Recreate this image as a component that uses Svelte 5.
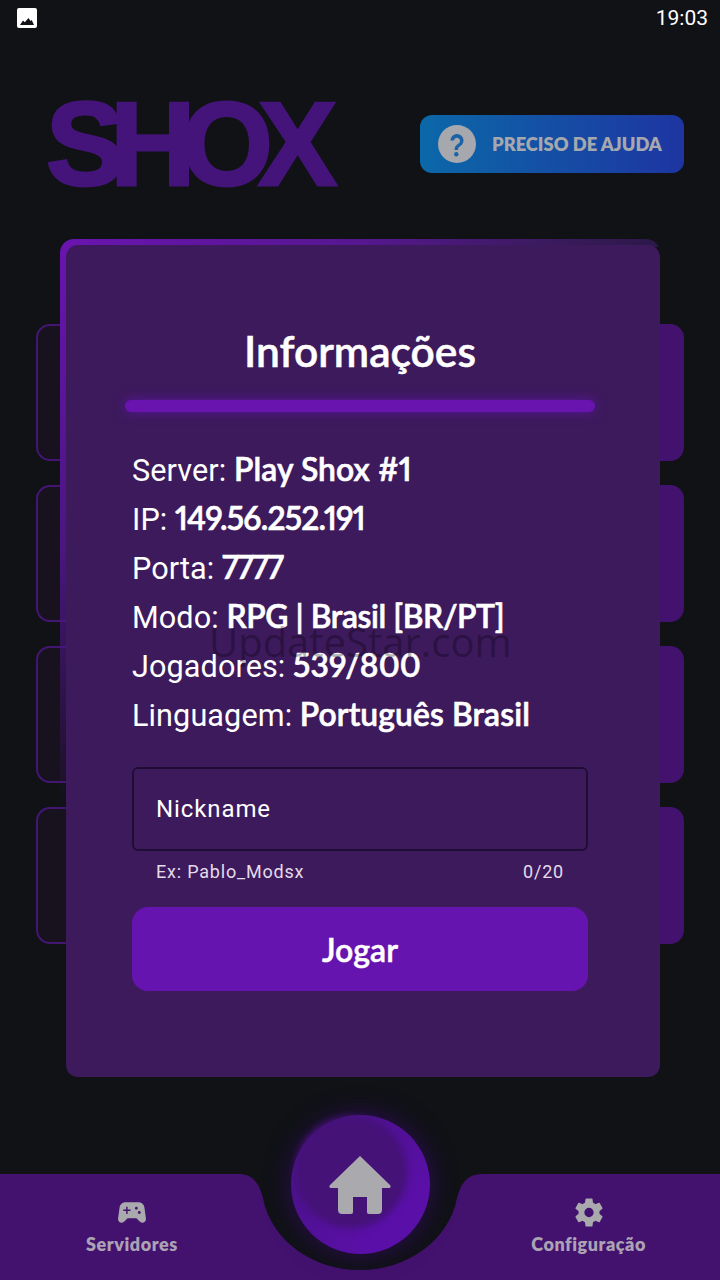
<script>
  const rows = [
    { k: 'Server', v: 'Play Shox #1' },
    { k: 'IP', v: '149.56.252.191', cls: 'tight' },
    { k: 'Porta', v: '7777', cls: 'tighter' },
    { k: 'Modo', v: 'RPG | Brasil [BR/PT]', cls: 'snug' },
    { k: 'Jogadores', v: '539/800' },
    { k: 'Linguagem', v: 'Português Brasil' }
  ];
  const cards = [1, 2, 3, 4];
</script>

<div class="page">
  <div class="statusbar">
    <svg class="status-icon" viewBox="0 0 20 20" width="20" height="20">
      <rect width="20" height="20" rx="2" fill="#fff" />
      <path d="M3 17l3-4.500 1.800 1.800L11.500 10l2 3 1.200-1L17 17z" fill="#101216" />
    </svg>
    <span class="clock">19:03</span>
  </div>

  <header class="header">
    <div class="logo">SHOX</div>
    <div class="help">
      <svg class="help-icon" viewBox="0 0 38 38" width="38" height="38">
        <circle cx="19" cy="19" r="19" fill="#a6a8ae" />
        <path d="M12.500 15.500a6.500 6.500 0 1 1 10.200 5.300c-1.900 1.300-2.700 2.200-2.700 4.200h-3.400c0-3.200 1.200-4.500 3.600-6.200a3.100 3.100 0 1 0-4.300-3.300z" fill="#1b62a6" />
        <circle cx="18.300" cy="29.300" r="2.200" fill="#1b62a6" />
      </svg>
      <span>PRECISO DE AJUDA</span>
    </div>
  </header>

  <div class="cards">
    {#each cards as c}
      <div class="card">
        <div class="card-left"></div>
        <div class="card-right"></div>
      </div>
    {/each}
  </div>

  <nav class="nav">
    <svg class="nav-bg" viewBox="0 0 720 106" width="720" height="106">
      <path d="M0 0H238C252 0 259 8 263 24C271 66 312 96 360 96C408 96 449 66 457 24C461 8 468 0 482 0H720V106H0Z" fill="#43126f" />
    </svg>
    <div class="nav-item">
      <svg viewBox="0 0 24 24" width="36" height="36">
        <path d="M21.580 16.090l-1.090-7.660C20.210 6.460 18.520 5 16.530 5H7.470C5.480 5 3.790 6.460 3.510 8.430l-1.090 7.660C2.200 17.630 3.390 19 4.940 19c.68 0 1.320-.27 1.800-.75L9 16h6l2.250 2.250c.48.48 1.130.75 1.800.75 1.560 0 2.750-1.370 2.530-2.910zM11 11H9v2H8v-2H6v-1h2V8h1v2h2v1zm4-1c-.55 0-1-.45-1-1s.45-1 1-1 1 .45 1 1-.45 1-1 1zm2 3c-.55 0-1-.45-1-1s.45-1 1-1 1 .45 1 1-.45 1-1 1z" fill="#a9a9ae" />
      </svg>
      <span>Servidores</span>
    </div>
    <div class="nav-item">
      <svg viewBox="0 0 24 24" width="36" height="36">
        <path d="M19.140 12.940c.04-.3.060-.61.060-.94s-.02-.64-.07-.94l2.030-1.580a.49.49 0 0 0 .12-.61l-1.920-3.320a.49.49 0 0 0-.59-.22l-2.390.96a7 7 0 0 0-1.620-.94l-.36-2.540a.48.48 0 0 0-.48-.41h-3.840a.48.48 0 0 0-.47.41l-.36 2.540a7.200 7.200 0 0 0-1.620.94l-2.390-.96a.48.48 0 0 0-.59.22L2.740 8.870a.48.48 0 0 0 .12.61l2.030 1.580c-.05.3-.09.63-.09.94s.02.64.07.94l-2.030 1.580a.49.49 0 0 0-.12.61l1.920 3.320c.12.22.37.29.59.22l2.390-.96c.5.38 1.030.7 1.620.94l.36 2.540c.05.24.24.41.48.41h3.840c.24 0 .44-.17.47-.41l.36-2.540a7 7 0 0 0 1.620-.94l2.390.96c.22.08.47 0 .59-.22l1.920-3.320a.48.48 0 0 0-.12-.61zM12 15.200a3.200 3.200 0 1 1 0-6.400 3.200 3.200 0 0 1 0 6.400z" fill="#a9a9ae" />
      </svg>
      <span>Configuração</span>
    </div>
    <div class="home">
      <div class="home-inner"></div>
      <svg class="home-icon" viewBox="0 0 62 58" width="62" height="58">
        <path d="M31 0L61 29c1.200 1.300.5 3-1.200 3H53v22c0 2.400-1.600 4-4 4H40c-1.300 0-2-.7-2-2V41H24v15c0 1.300-.7 2-2 2H13c-2.400 0-4-1.600-4-4V32H2.200C.5 32-.2 30.300 1 29z" fill="#a9a9ae" />
      </svg>
    </div>
  </nav>

  <div class="modal">
    <div class="modal-inner">
      <h2>Informações</h2>
      <div class="bar"></div>
      <div class="info">
        {#each rows as row}
          <p>{row.k}: <b class={row.cls}>{row.v}</b></p>
        {/each}
      </div>
      <div class="field">Nickname</div>
      <div class="helper"><span>Ex: Pablo_Modsx</span><span>0/20</span></div>
      <div class="play">Jogar</div>
    </div>
  </div>

  <div class="watermark">UpdateStar.com</div>
</div>

<style>
  :global(body) {
    margin: 0;
    background: #101216;
  }

  .page {
    position: relative;
    width: 720px;
    height: 1280px;
    overflow: hidden;
    display: flex;
    flex-direction: column;
    background: #101216;
    font-family: Roboto, sans-serif;
  }

  .statusbar {
    height: 36px;
    padding: 0 12px 0 17px;
    display: flex;
    align-items: center;
    justify-content: space-between;
  }
  .clock {
    color: #fff;
    font-size: 21px;
    font-weight: 400;
  }

  .header {
    height: 288px;
    padding: 0 36px 0 46px;
    display: flex;
    justify-content: space-between;
    box-sizing: border-box;
  }
  .logo {
    margin-top: 48px;
    height: 120px;
    width: 293px;
    font-family: "Liberation Sans", sans-serif;
    font-weight: 700;
    font-size: 118px;
    line-height: 120px;
    letter-spacing: -14.5px;
    color: #45147a;
    -webkit-text-stroke: 3px #45147a;
  }
  .help {
    margin-top: 79px;
    width: 264px;
    height: 58px;
    border-radius: 12px;
    background: linear-gradient(90deg, #0b68a8, #1e35a2);
    display: flex;
    align-items: center;
    gap: 16px;
    padding-left: 18px;
    box-sizing: border-box;
    color: #a6a8ae;
    font-family: Lato, sans-serif;
    font-weight: 800;
    font-size: 18.3px;
  }

  .cards {
    padding: 0 36px;
    display: flex;
    flex-direction: column;
    gap: 24px;
  }
  .card {
    height: 137px;
    display: flex;
  }
  .card-left {
    flex: 1;
    border: 2px solid #421672;
    border-right: 0;
    border-radius: 14px 0 0 14px;
    background: #18121f;
  }
  .card-right {
    flex: 1;
    background: #43126f;
    border-radius: 0 14px 14px 0;
  }

  .nav {
    position: relative;
    margin-top: auto;
    height: 106px;
    display: flex;
    justify-content: space-between;
    padding: 21px 74px 0 86px;
    box-sizing: border-box;
  }
  .nav-bg {
    position: absolute;
    left: 0;
    top: 0;
  }
  .nav-item {
    position: relative;
    display: flex;
    flex-direction: column;
    align-items: center;
    gap: 3px;
    height: 60px;
    justify-content: flex-end;
    color: #aba3b4;
    font-family: Lato, sans-serif;
    font-weight: 800;
    font-size: 18px;
    line-height: 22px;
    letter-spacing: 0.55px;
  }
  .home {
    position: absolute;
    left: 291px;
    top: -59px;
    width: 139px;
    height: 139px;
    border-radius: 50%;
    background: linear-gradient(135deg, #4a1288 20%, #5a0fa8 75%);
    box-shadow: 0 0 26px #2d0b55;
  }
  .home-inner {
    position: absolute;
    left: 4px;
    top: 1px;
    width: 112px;
    height: 112px;
    border-radius: 50%;
    background: #451278;
    filter: blur(3px);
  }
  .home-icon {
    position: absolute;
    left: 38px;
    top: 41px;
  }

  .modal {
    position: absolute;
    left: 60px;
    top: 239px;
    width: 600px;
    height: 838px;
    border-radius: 14px;
    background:
      linear-gradient(90deg, #6a14b0 0%, #561790 50%, #3c1a60 80%, #2b1848 100%) top / 100% 8px no-repeat,
      linear-gradient(135deg, #6a14b0 0%, #4a1680 22%, transparent 40%);
  }
  .modal-inner {
    position: absolute;
    left: 6px;
    top: 6px;
    right: 0;
    bottom: 0;
    border-radius: 12px;
    background: #3d1a5c;
    color: #fff;
    display: flex;
    flex-direction: column;
    padding: 0 72px 0 66px;
    box-sizing: border-box;
  }
  h2 {
    margin: 79px 0 0;
    text-align: center;
    font-family: Lato, sans-serif;
    font-weight: 600;
    font-size: 42.5px;
    line-height: 54px;
    -webkit-text-stroke: 0.5px #fff;
  }
  .bar {
    height: 12px;
    margin: 22px -7px 0;
    border-radius: 6px;
    background: #6a14b0;
    box-shadow: 0 0 12px #5a14a0;
  }
  .info {
    margin-top: 33px;
  }
  .info p {
    margin: 0;
    font-size: 30.6px;
    line-height: 49px;
    height: 49px;
    white-space: nowrap;
    letter-spacing: 0.1px;
  }
  .info b {
    font-family: Lato, sans-serif;
    font-weight: 600;
    font-size: 31.8px;
    font-variant-numeric: proportional-nums;
    -webkit-text-stroke: 0.6px #fff;
  }
  .info b.tight {
    letter-spacing: -0.8px;
  }
  .info b.tighter {
    letter-spacing: -2px;
  }
  .info b.snug {
    letter-spacing: -0.4px;
  }
  .field {
    margin-top: 28px;
    height: 84px;
    border: 2px solid #1f0d35;
    border-radius: 6px;
    box-sizing: border-box;
    padding-left: 22px;
    display: flex;
    align-items: center;
    font-size: 24px;
    letter-spacing: 0.9px;
  }
  .helper {
    display: flex;
    justify-content: space-between;
    padding: 0 24px;
    margin-top: 10px;
    font-size: 18px;
    line-height: 22px;
    letter-spacing: 0.8px;
    color: #e4dcea;
  }
  .play {
    margin-top: 24px;
    height: 84px;
    border-radius: 16px;
    background: #6614b0;
    display: flex;
    align-items: center;
    justify-content: center;
    font-family: Lato, sans-serif;
    font-weight: 600;
    font-size: 32px;
    -webkit-text-stroke: 0.5px #fff;
  }

  .watermark {
    position: absolute;
    left: 209px;
    top: 617px;
    font-family: "Open Sans", sans-serif;
    font-size: 40px;
    line-height: 50px;
    color: rgba(0, 0, 0, 0.3);
    pointer-events: none;
  }
</style>
